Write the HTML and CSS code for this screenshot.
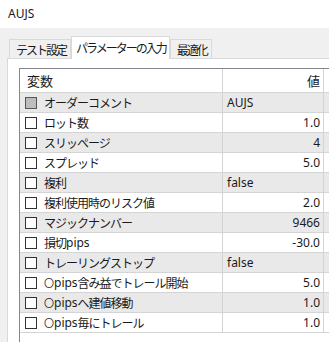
FILE: index.html
```html
<!DOCTYPE html>
<html lang="ja">
<head>
    <meta charset="UTF-8">
    <title>AUJS</title>
    <link rel="stylesheet" href="styles.css">
</head>
<body>

<div class="titlebar">AUJS</div>

<div class="window">
    <div class="tabs">
        <div class="tab">テスト設定</div>
        <div class="tab active">パラメーターの入力</div>
        <div class="tab">最適化</div>
    </div>

    <div class="panel">
        <div class="list">
            <div class="row head">
                <div class="cell name">変数</div>
                <div class="cell val num">値</div>
            </div>
            <div class="row">
                <div class="cell name"><span class="check grey"></span>オーダーコメント</div>
                <div class="cell val">AUJS</div>
            </div>
            <div class="row">
                <div class="cell name"><span class="check"></span>ロット数</div>
                <div class="cell val num">1.0</div>
            </div>
            <div class="row">
                <div class="cell name"><span class="check"></span>スリッページ</div>
                <div class="cell val num">4</div>
            </div>
            <div class="row">
                <div class="cell name"><span class="check"></span>スプレッド</div>
                <div class="cell val num">5.0</div>
            </div>
            <div class="row">
                <div class="cell name"><span class="check"></span>複利</div>
                <div class="cell val">false</div>
            </div>
            <div class="row">
                <div class="cell name"><span class="check"></span>複利使用時のリスク値</div>
                <div class="cell val num">2.0</div>
            </div>
            <div class="row">
                <div class="cell name"><span class="check"></span>マジックナンバー</div>
                <div class="cell val num">9466</div>
            </div>
            <div class="row">
                <div class="cell name"><span class="check"></span>損切<span class="latin">pips</span></div>
                <div class="cell val num">-30.0</div>
            </div>
            <div class="row">
                <div class="cell name"><span class="check"></span>トレーリングストップ</div>
                <div class="cell val">false</div>
            </div>
            <div class="row">
                <div class="cell name"><span class="check"></span><span class="circle">〇</span><span class="latin">pips</span>含み益でトレール開始</div>
                <div class="cell val num">5.0</div>
            </div>
            <div class="row">
                <div class="cell name"><span class="check"></span><span class="circle">〇</span><span class="latin">pips</span>へ建値移動</div>
                <div class="cell val num">1.0</div>
            </div>
            <div class="row">
                <div class="cell name"><span class="check"></span><span class="circle">〇</span><span class="latin">pips</span>毎にトレール</div>
                <div class="cell val num">1.0</div>
            </div>
        </div>
    </div>
</div>

</body>
</html>
```

FILE: styles.css
```css
body {
    margin: 0;
    padding: 0;
    background-color: #ffffff;
    font-family: "Noto Sans", "Noto Sans CJK JP", sans-serif;
    font-size: 12px;
    color: #1a1a1a;
    overflow: hidden;
}
.titlebar {
    height: 28px;
    line-height: 27px;
    padding-left: 8px;
    background-color: #ffffff;
}
.window {
    background-color: #f0f0f0;
    padding-left: 7px;
    height: 314px;
    overflow: hidden;
}
.tabs {
    display: flex;
    align-items: flex-end;
    padding-top: 8px;
    padding-left: 2px;
    height: 22px;
}
.tab {
    height: 19px;
    line-height: 19px;
    padding: 0 4px 0 6px;
    border: 1px solid #d9d9d9;
    border-bottom: none;
    box-sizing: border-box;
    background-color: #f0f0f0;
    font-family: "Noto Sans CJK JP", sans-serif;
    font-size: 12px;
    letter-spacing: -2px;
}
.tab.active {
    height: 23px;
    line-height: 22px;
    background-color: #ffffff;
    margin-bottom: -1px;
    position: relative;
    padding: 0 3px 0 4px;
}
.panel {
    background-color: #ffffff;
    border-top: 1px solid #d9d9d9;
    border-left: 1px solid #d9d9d9;
    padding: 9px 0 0 11px;
    height: 274px;
}
.list {
    border-top: 1px solid #828790;
    border-left: 1px solid #828790;
    width: 320px;
    height: 273px;
}
.row {
    display: grid;
    grid-template-columns: 203px 101px;
    height: 20px;
    border-bottom: 1px solid #d4d4d4;
    box-sizing: border-box;
}
.row:nth-child(even) {
    background-color: #e9e9e9;
}
.row.head {
    height: 24px;
    background-color: #ffffff;
    font-size: 13px;
}
.cell {
    display: flex;
    align-items: center;
    border-right: 1px solid #d4d4d4;
    white-space: nowrap;
    overflow: hidden;
}
.cell.name {
    padding-left: 5px;
    font-family: "Noto Sans CJK JP", sans-serif;
    letter-spacing: -1px;
}
.cell.name .latin {
    font-family: "Noto Sans", sans-serif;
    letter-spacing: 0;
}
.cell.name .circle {
    font-size: 10px;
    letter-spacing: -1px;
    margin-right: 1px;
}
.row.head .cell.name {
    padding-left: 7px;
    letter-spacing: 0;
}
.cell.val {
    padding-left: 4px;
    padding-right: 3px;
}
.cell.num {
    justify-content: flex-end;
}
.check {
    width: 10px;
    height: 10px;
    border: 1px solid #333333;
    background-color: #ffffff;
    margin-right: 7px;
    flex-shrink: 0;
}
.check.grey {
    background-color: #bdbdbd;
    border-color: #555555;
}
```
